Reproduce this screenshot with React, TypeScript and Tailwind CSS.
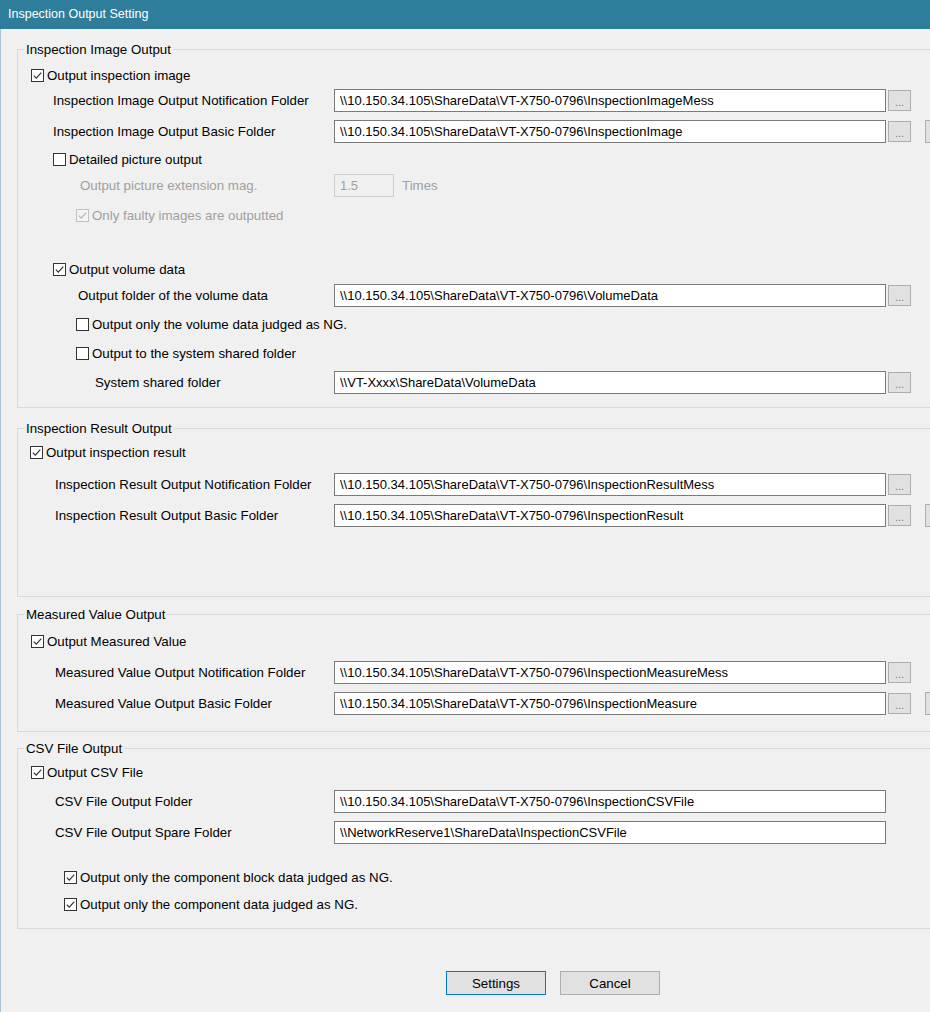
import { ReactNode } from "react";

const FONT = "font-['Liberation_Sans',Arial,sans-serif]";

function Check({ checked, disabled }: { checked?: boolean; disabled?: boolean }) {
  return (
    <span
      className={
        "flex h-[13px] w-[13px] shrink-0 items-center justify-center border " +
        (disabled ? "border-[#c2c2c2] bg-[#f4f4f4]" : "border-[#333333] bg-white")
      }
    >
      {checked ? (
        <svg width="11" height="11" viewBox="0 0 11 11">
          <path
            d="M1.8 5.6 L4.3 8.1 L9.3 2.6"
            fill="none"
            stroke={disabled ? "#b5b5b5" : "#333333"}
            strokeWidth="1.2"
          />
        </svg>
      ) : null}
    </span>
  );
}

function CheckRow({
  label,
  checked,
  disabled,
  className,
}: {
  label: string;
  checked?: boolean;
  disabled?: boolean;
  className: string;
}) {
  return (
    <div className={"flex h-[18px] items-center gap-[3px] " + className}>
      <Check checked={checked} disabled={disabled} />
      <span className={"pt-[1px] leading-[16px] " + (disabled ? "text-[#a0a0a0]" : "text-black")}>{label}</span>
    </div>
  );
}

function Browse({ className, dots = true }: { className?: string; dots?: boolean }) {
  return (
    <button
      className={
        "flex h-[21px] w-[23px] shrink-0 items-center justify-center border border-[#adadad] bg-[#e1e1e1] pt-[3px] text-[11px] leading-none text-[#6a7d94] " +
        (className || "ml-[2px]")
      }
    >
      {dots ? "..." : ""}
    </button>
  );
}

function InputRow({
  label,
  value,
  pad,
  className,
  browse = true,
  extra,
}: {
  label: string;
  value: string;
  pad: string;
  className: string;
  browse?: boolean;
  extra?: boolean;
}) {
  return (
    <div className={"flex h-[23px] items-center " + className}>
      <span className={"w-[316px] shrink-0 pt-[1px] leading-[16px] " + pad}>{label}</span>
      <input
        readOnly
        value={value}
        className="h-[23px] w-[552px] shrink-0 border border-[#7a7a7a] bg-white pl-[5px] text-[13px] text-black outline-none"
      />
      {browse ? <Browse /> : null}
      {extra ? <Browse className="ml-[14px] h-[23px]" dots={false} /> : null}
    </div>
  );
}

function Group({ title, className, children }: { title: string; className: string; children: ReactNode }) {
  return (
    <fieldset className={"ml-[16px] w-[960px] border border-[#d9d9d9] " + className}>
      <legend className="ml-[6px] h-[16px] px-[2px] pt-[1px] leading-[16px]">{title}</legend>
      {children}
    </fieldset>
  );
}

export default function App() {
  return (
    <div className={"h-[1012px] w-[930px] overflow-hidden bg-[#f0f0f0] text-[13.3px] text-black " + FONT}>
      <div className="flex h-[29px] items-center bg-[#2e7d9b] pl-[8px] text-[12.5px] text-white">
        Inspection Output Setting
      </div>
      <div className="flex h-[983px] flex-col border-l border-[#a9c3d6]">
        <Group title="Inspection Image Output" className="mt-[12px] pb-[13px]">
          <CheckRow label="Output inspection image" checked className="mt-[9px] ml-[13px]" />
          <InputRow
            label="Inspection Image Output Notification Folder"
            value="\\10.150.34.105\ShareData\VT-X750-0796\InspectionImageMess"
            pad="pl-[35px]"
            className="mt-[5px]"
          />
          <InputRow
            label="Inspection Image Output Basic Folder"
            value="\\10.150.34.105\ShareData\VT-X750-0796\InspectionImage"
            pad="pl-[35px]"
            className="mt-[8px]"
            extra
          />
          <CheckRow label="Detailed picture output" className="mt-[7px] ml-[35px]" />
          <div className="mt-[6px] flex h-[23px] items-center text-[#a0a0a0]">
            <span className="w-[316px] shrink-0 pl-[62px] pt-[1px] leading-[16px]">Output picture extension mag.</span>
            <input
              readOnly
              value="1.5"
              className="h-[23px] w-[60px] border border-[#cccccc] bg-[#f0f0f0] pl-[5px] text-[13px] text-[#a0a0a0] outline-none"
            />
            <span className="ml-[8px] pt-[1px]">Times</span>
          </div>
          <CheckRow label="Only faulty images are outputted" checked disabled className="mt-[9px] ml-[58px]" />
          <CheckRow label="Output volume data" checked className="mt-[36px] ml-[35px]" />
          <InputRow
            label="Output folder of the volume data"
            value="\\10.150.34.105\ShareData\VT-X750-0796\VolumeData"
            pad="pl-[60px]"
            className="mt-[6px]"
          />
          <CheckRow label="Output only the volume data judged as NG." className="mt-[8px] ml-[58px]" />
          <CheckRow label="Output to the system shared folder" className="mt-[11px] ml-[58px]" />
          <InputRow
            label="System shared folder"
            value="\\VT-Xxxx\ShareData\VolumeData"
            pad="pl-[77px]"
            className="mt-[9px]"
          />
        </Group>

        <Group title="Inspection Result Output" className="mt-[12px] pb-[69px]">
          <CheckRow label="Output inspection result" checked className="mt-[7px] ml-[12px]" />
          <InputRow
            label="Inspection Result Output Notification Folder"
            value="\\10.150.34.105\ShareData\VT-X750-0796\InspectionResultMess"
            pad="pl-[37px]"
            className="mt-[12px]"
          />
          <InputRow
            label="Inspection Result Output Basic Folder"
            value="\\10.150.34.105\ShareData\VT-X750-0796\InspectionResult"
            pad="pl-[37px]"
            className="mt-[8px]"
            extra
          />
        </Group>

        <Group title="Measured Value Output" className="mt-[9px] pb-[16px]">
          <CheckRow label="Output Measured Value" checked className="mt-[10px] ml-[13px]" />
          <InputRow
            label="Measured Value Output Notification Folder"
            value="\\10.150.34.105\ShareData\VT-X750-0796\InspectionMeasureMess"
            pad="pl-[37px]"
            className="mt-[11px]"
          />
          <InputRow
            label="Measured Value Output Basic Folder"
            value="\\10.150.34.105\ShareData\VT-X750-0796\InspectionMeasure"
            pad="pl-[37px]"
            className="mt-[8px]"
            extra
          />
        </Group>

        <Group title="CSV File Output" className="mt-[8px] pb-[15px]">
          <CheckRow label="Output CSV File" checked className="mt-[7px] ml-[13px]" />
          <InputRow
            label="CSV File Output Folder"
            value="\\10.150.34.105\ShareData\VT-X750-0796\InspectionCSVFile"
            pad="pl-[37px]"
            className="mt-[9px]"
            browse={false}
          />
          <InputRow
            label="CSV File Output Spare Folder"
            value="\\NetworkReserve1\ShareData\InspectionCSVFile"
            pad="pl-[37px]"
            className="mt-[8px]"
            browse={false}
          />
          <CheckRow label="Output only the component block data judged as NG." checked className="mt-[24px] ml-[46px]" />
          <CheckRow label="Output only the component data judged as NG." checked className="mt-[9px] ml-[46px]" />
        </Group>

        <div className="mt-[42px] ml-[445px] flex gap-[14px]">
          <button className="h-[24px] w-[100px] border border-[#0078d7] bg-[#e1e1e1] pt-[1px] text-black">Settings</button>
          <button className="h-[24px] w-[100px] border border-[#adadad] bg-[#e1e1e1] pt-[1px] text-black">Cancel</button>
        </div>
      </div>
    </div>
  );
}
